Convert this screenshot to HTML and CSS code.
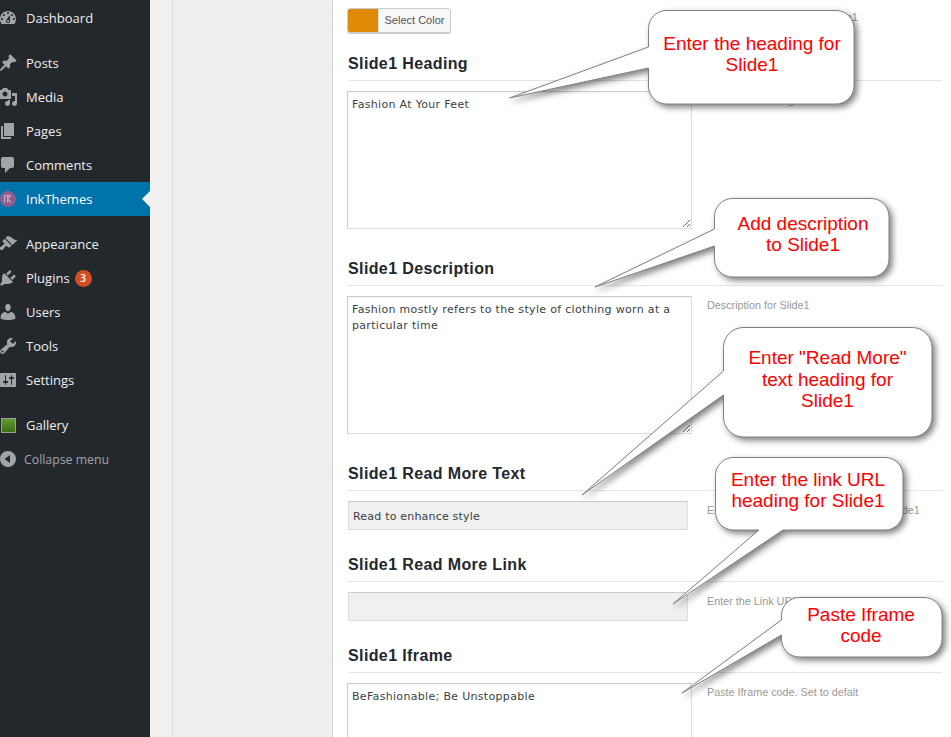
FILE: index.html
```html
<!DOCTYPE html>
<html lang="en">
<head>
<meta charset="utf-8">
<title>Theme Options</title>
<link rel="stylesheet" href="styles.css">
</head>
<body>
<nav class="sidebar">
  <ul class="menu">
    <li class="item"><svg class="icon" viewBox="0 0 20 20"><path d="M3.76 16h12.48c1.1-1.37 1.76-3.11 1.76-5 0-4.42-3.58-8-8-8s-8 3.58-8 8c0 1.89.66 3.63 1.76 5zM10 4c.55 0 1 .45 1 1s-.45 1-1 1-1-.45-1-1 .45-1 1-1zM6 6c.55 0 1 .45 1 1s-.45 1-1 1-1-.45-1-1 .45-1 1-1zm8 0c.55 0 1 .45 1 1s-.45 1-1 1-1-.45-1-1 .45-1 1-1zm-5.37 5.55L12 7v6c0 1.1-.9 2-2 2s-2-.9-2-2c0-.57.24-1.08.63-1.45zM4 10c.55 0 1 .45 1 1s-.45 1-1 1-1-.45-1-1 .45-1 1-1zm12 0c.55 0 1 .45 1 1s-.45 1-1 1-1-.45-1-1 .45-1 1-1zm-5 3c0-.55-.45-1-1-1s-1 .45-1 1 .45 1 1 1 1-.45 1-1z" fill-rule="evenodd"/></svg>Dashboard</li>
    <li class="item group"><svg class="icon" viewBox="0 0 20 20"><path d="M10.44 3.02l1.82-1.82 6.36 6.35-1.83 1.82c-1.05-.68-2.48-.57-3.41.36l-.75.75c-.92.93-1.04 2.35-.35 3.41l-1.83 1.82-2.41-2.41-2.8 2.79c-.42.42-3.38 2.71-3.8 2.29s1.86-3.39 2.28-3.81l2.79-2.79L4.1 9.36l1.83-1.82c1.05.69 2.48.57 3.4-.36l.75-.75c.93-.92 1.05-2.35.36-3.41z"/></svg>Posts</li>
    <li class="item"><svg class="icon" viewBox="0 0 20 20"><path d="M13 11V4c0-.55-.45-1-1-1h-1.67L9 1H5L3.67 3H2c-.55 0-1 .45-1 1v7c0 .55.45 1 1 1h10c.55 0 1-.45 1-1zM7 4.5c1.38 0 2.5 1.12 2.5 2.5S8.38 9.5 7 9.5 4.5 8.38 4.5 7 5.62 4.5 7 4.5zM14 6h5v10.5c0 1.38-1.12 2.5-2.5 2.5S14 17.88 14 16.5s1.12-2.5 2.5-2.5c.17 0 .34.02.5.05V9h-3V6zm-4 8.05V13h2v3.5c0 1.38-1.12 2.5-2.5 2.5S7 17.88 7 16.5 8.12 14 9.5 14c.17 0 .34.02.5.05z" fill-rule="evenodd"/></svg>Media</li>
    <li class="item"><svg class="icon" viewBox="0 0 20 20"><path d="M6 15V2h10v13H6zm-1 1h8v2H3V5h2v11z"/></svg>Pages</li>
    <li class="item"><svg class="icon" viewBox="0 0 20 20"><path d="M5 2h9c1.1 0 2 .9 2 2v7c0 1.1-.9 2-2 2h-2l-5 5v-5H5c-1.1 0-2-.9-2-2V4c0-1.1.9-2 2-2z"/></svg>Comments</li>
    <li class="item active"><svg class="icon" viewBox="0 0 20 20"><circle class="ink-disc" cx="10" cy="10" r="8"/><path class="ink-mark" d="M6.500 6.500v7M9.500 6.500v7M9.500 10l3-3.500M9.500 10l3.500 3.500M6 6.500h7"/></svg>InkThemes</li>
    <li class="item group"><svg class="icon" viewBox="0 0 20 20"><path d="M14.48 11.06L7.41 3.99l1.5-1.5c.5-.56 2.3-.47 3.51.32 1.21.8 1.43 1.28 2.91 2.1 1.18.64 2.45 1.26 4.45.85zm-.71.71L6.7 4.7 4.93 6.47c-.39.39-.39 1.02 0 1.41l1.06 1.06c.39.39.39 1.03 0 1.42-.6.6-1.43 1.11-2.21 1.69-.35.26-.7.53-1.01.84C1.43 12.73 1 14.41 1.9 15.3c.89.9 2.27.9 3.1.1.31-.31.58-.66.85-1.01.57-.78 1.08-1.61 1.69-2.21.39-.39 1.02-.39 1.41 0l1.06 1.06c.39.39 1.02.39 1.41 0z"/></svg>Appearance</li>
    <li class="item"><svg class="icon" viewBox="0 0 20 20"><path d="M13.11 4.36L9.87 7.6 8 5.73l3.24-3.24c.35-.34 1.05-.2 1.56.32.52.51.66 1.21.31 1.55zm-8 1.77l.91-1.12 9.01 9.01-1.19.84c-.71.71-2.63 1.16-3.82 1.16H6.14L4.9 17.26c-.59.59-1.54.59-2.12 0-.59-.58-.59-1.53 0-2.12l1.24-1.24v-3.88c0-1.13.4-3.19 1.09-3.89zm7.26 3.97l3.24-3.24c.34-.35 1.04-.21 1.55.31.52.51.66 1.21.31 1.55l-3.24 3.25z"/></svg>Plugins<span class="badge">3</span></li>
    <li class="item"><svg class="icon" viewBox="0 0 20 20"><path d="M10 9.25c-2.27 0-2.73-3.44-2.73-3.44C7 4.02 7.82 2 9.97 2c2.16 0 2.98 2.02 2.71 3.81 0 0-.41 3.44-2.68 3.44zm0 2.57L12.72 10c2.39 0 4.52 2.33 4.52 4.53v2.49s-3.65 1.13-7.24 1.13c-3.65 0-7.24-1.13-7.24-1.13v-2.49c0-2.25 1.94-4.48 4.47-4.48z"/></svg>Users</li>
    <li class="item"><svg class="icon" viewBox="0 0 20 20"><path d="M16.68 9.77c-1.34 1.34-3.3 1.67-4.95.99l-5.41 6.52c-.99.99-2.59.99-3.58 0s-.99-2.59 0-3.57l6.52-5.42c-.68-1.65-.35-3.61.99-4.95 1.28-1.28 3.12-1.62 4.72-1.06l-2.89 2.89 2.82 2.82 2.86-2.87c.53 1.58.18 3.39-1.08 4.65zM3.81 16.21c.4.39 1.04.39 1.43 0 .4-.4.4-1.04 0-1.43-.39-.4-1.03-.4-1.43 0-.39.39-.39 1.03 0 1.43z" fill-rule="evenodd"/></svg>Tools</li>
    <li class="item"><svg class="icon" viewBox="0 0 20 20"><path d="M18 16V4c0-.55-.45-1-1-1H3c-.55 0-1 .45-1 1v12c0 .55.45 1 1 1h14c.55 0 1-.45 1-1zM8 11h1c.55 0 1 .45 1 1s-.45 1-1 1H8v1.5c0 .28-.22.5-.5.5s-.5-.22-.5-.5V13H6c-.55 0-1-.45-1-1s.45-1 1-1h1V5.5c0-.28.22-.5.5-.5s.5.22.5.5V11zm5-2h-1c-.55 0-1-.45-1-1s.45-1 1-1h1V5.5c0-.28.22-.5.5-.5s.5.22.5.5V7h1c.55 0 1 .45 1 1s-.45 1-1 1h-1v5.5c0 .28-.22.5-.5.5s-.5-.22-.5-.5V9z" fill-rule="evenodd"/></svg>Settings</li>
    <li class="item group"><span class="gallery-icon"></span>Gallery</li>
    <li class="item collapse"><svg class="icon" viewBox="0 0 20 20"><path d="M10 2a8 8 0 1 1 0 16 8 8 0 0 1 0-16zm2 4L6.500 10l5.500 4z" fill-rule="evenodd"/></svg><span class="collapse-label">Collapse menu</span></li>
  </ul>
</nav>

<div class="gutter"></div>
<div class="tabs"></div>

<main class="content">
  <div class="row first">
    <button class="color-button" type="button"><span class="swatch"></span><span class="color-label">Select Color</span></button>
    <p class="desc">Set Background Color of Slide1</p>
  </div>

  <h3 class="heading">Slide1 Heading</h3>
  <div class="row">
    <textarea class="area">Fashion At Your Feet</textarea>
    <p class="desc">Enter the Heading for Slide1</p>
  </div>

  <h3 class="heading after-area">Slide1 Description</h3>
  <div class="row">
    <textarea class="area">Fashion mostly refers to the style of clothing worn at a particular time</textarea>
    <p class="desc">Description for Slide1</p>
  </div>

  <h3 class="heading after-area">Slide1 Read More Text</h3>
  <div class="row">
    <input class="field" type="text" value="Read to enhance style">
    <p class="desc">Enter the Read More Text heading for Slide1</p>
  </div>

  <h3 class="heading after-field">Slide1 Read More Link</h3>
  <div class="row">
    <input class="field" type="text" value="">
    <p class="desc">Enter the Link URL for Slide1</p>
  </div>

  <h3 class="heading after-field">Slide1 Iframe</h3>
  <div class="row">
    <textarea class="area">BeFashionable; Be Unstoppable</textarea>
    <p class="desc">Paste Iframe code. Set to defalt</p>
  </div>
</main>

<div class="annotations">
  <svg class="bubbles" viewBox="0 0 951 737" width="951" height="737">
    <path class="bubble" d="M666 10.500H836A18 18 0 0 1 854 28.500V86A18 18 0 0 1 836 104H666A18 18 0 0 1 648.500 86V68L509.500 98L648.500 47V28.500A18 18 0 0 1 666 10.500Z"/>
    <path class="bubble" d="M732 198.500H871A18 18 0 0 1 889 216.500V259A18 18 0 0 1 871 277H732A18 18 0 0 1 714.500 259V246L595 287L714.500 229V216.500A18 18 0 0 1 732 198.500Z"/>
    <path class="bubble" d="M743 327.500H912A20 20 0 0 1 932 347.500V417A20 20 0 0 1 912 437H743A20 20 0 0 1 723.500 417V395L582 495L723.500 371V347.500A20 20 0 0 1 743 327.500Z"/>
    <path class="bubble" d="M733 457.500H885A18 18 0 0 1 903 475.500V512A18 18 0 0 1 885 530H783L673 604L759 530H733A18 18 0 0 1 715.500 512V475.500A18 18 0 0 1 733 457.500Z"/>
    <path class="bubble" d="M799 597.500H924A18 18 0 0 1 942 615.500V639A18 18 0 0 1 924 657H799A18 18 0 0 1 781.500 639V635L682 693L781.500 620V615.500A18 18 0 0 1 799 597.500Z"/>
  </svg>
  <div class="note note1">Enter the heading for<br>Slide1</div>
  <div class="note note2">Add description<br>to Slide1</div>
  <div class="note note3">Enter "Read More"<br>text heading for<br>Slide1</div>
  <div class="note note4">Enter the link URL<br>heading for Slide1</div>
  <div class="note note5">Paste Iframe<br>code</div>
</div>
</body>
</html>
```

FILE: styles.css
```css
* { box-sizing: border-box; }

html, body {
  margin: 0;
  height: 100%;
  overflow: hidden;
}

body {
  display: flex;
  position: relative;
  background: #fff;
  font-family: "Liberation Sans", Arial, sans-serif;
}

/* Admin sidebar */
.sidebar {
  flex: 0 0 150px;
  height: 100%;
  background: #23282d;
}

.menu {
  list-style: none;
  margin: 1px 0 0;
  padding: 0;
}

.item {
  position: relative;
  display: flex;
  align-items: center;
  height: 34px;
  color: #eee;
  font: 13px/34px "Open Sans", sans-serif;
}

.item.group { margin-top: 11px; }

.icon {
  flex: none;
  width: 20px;
  height: 20px;
  margin: 0 8px 0 -2px;
  fill: #a0a5aa;
}

.active {
  background: #0073aa;
  color: #fff;
}

.active::after {
  content: "";
  position: absolute;
  right: 0;
  top: 9px;
  border: 8px solid transparent;
  border-left-width: 0;
  border-right-color: #f1f1f1;
}

.ink-disc { fill: #8f5d8c; }

.ink-mark {
  fill: none;
  stroke: #c9a6c6;
  stroke-width: 1.2;
}

.gallery-icon {
  flex: none;
  width: 15px;
  height: 15px;
  margin: 0 10px 0 1px;
  border: 1px solid #9aa39a;
  background: linear-gradient(#5f9a2e, #3d6f19);
}

.collapse {
  color: #a0a5aa;
  font-size: 12.3px;
}

.collapse .icon { margin-right: 6px; }

.collapse-label { padding-top: 1px; line-height: 33px; }

.badge {
  width: 17px;
  height: 17px;
  margin-left: 5px;
  border-radius: 50%;
  background: #d54e21;
  color: #fff;
  font: 600 10px/17px "Open Sans", sans-serif;
  text-align: center;
}

/* Grey columns between the sidebar and the form */
.gutter {
  flex: 0 0 23px;
  background: #f0f0f0;
  border-right: 1px solid #ddd;
}

.tabs {
  flex: 0 0 160px;
  background: #efefef;
  border-right: 1px solid #d4d4d4;
}

/* Form */
.content {
  flex: 1;
  padding: 8px 0 0 14px;
  min-width: 0;
}

.row {
  display: grid;
  grid-template-columns: 345px 1fr;
  column-gap: 15px;
  align-items: start;
}

.heading {
  height: 35px;
  margin: 0 9px 10px 1px;
  border-bottom: 1px solid #e5e5e5;
  color: #23282d;
  font-size: 16px;
  font-weight: 700;
  letter-spacing: .38px;
  line-height: 36px;
}

.row.first + .heading { margin-top: 13px; }
.after-area { margin-top: 22px; }
.after-field { margin-top: 17px; }

.desc {
  margin: 0;
  color: #999;
  font-size: 10.8px;
  line-height: 18px;
}

.color-button {
  display: flex;
  align-items: stretch;
  width: 104px;
  height: 25px;
  padding: 0;
  border: 1px solid #ccc;
  border-radius: 3px;
  box-shadow: 0 1px 0 #ccc;
  background: #f7f7f7;
  overflow: hidden;
}

.swatch {
  flex: 0 0 30px;
  background: #e08a07;
}

.color-label {
  flex: 1;
  border-left: 1px solid #ddd;
  color: #555;
  font: 11px/23px "Liberation Sans", Arial, sans-serif;
  text-align: center;
}

.area {
  display: block;
  width: 345px;
  height: 138px;
  margin: 0;
  padding: 5px 4px 4px;
  border: 1px solid #ddd;
  border-top-color: #ccc;
  border-left-color: #ccc;
  box-shadow: inset 0 1px 2px rgba(0, 0, 0, .05);
  background: #fff;
  color: #3a3f44;
  font: 11px/16px "DejaVu Sans", Verdana, sans-serif;
  letter-spacing: .32px;
  outline: none;
}

.field {
  display: block;
  width: 340px;
  height: 29px;
  margin: 0 0 0 1px;
  padding: 1px 4px 0;
  border: 1px solid #ddd;
  border-top-color: #ccc;
  background: #f0f0f0;
  color: #3a3f44;
  font: 11px "DejaVu Sans", Verdana, sans-serif;
  letter-spacing: .2px;
  outline: none;
}

/* Callouts drawn over the screenshot */
.annotations {
  position: absolute;
  top: 0;
  left: 0;
  width: 951px;
  height: 737px;
  pointer-events: none;
}

.bubbles {
  position: absolute;
  top: 0;
  left: 0;
}

.bubble {
  fill: #fff;
  stroke: #808080;
  stroke-width: 1;
  filter: drop-shadow(3px 3px 3px rgba(0, 0, 0, .5));
}

.note {
  position: absolute;
  color: #f00;
  font-size: 19px;
  line-height: 21px;
  text-align: center;
}

.note1 { left: 648px; top: 33px; width: 208px; }
.note2 { left: 714px; top: 213px; width: 178px; }
.note3 { left: 723px; top: 347px; width: 209px; line-height: 21.5px; }
.note4 { left: 715px; top: 469px; width: 186px; }
.note5 { left: 781px; top: 604px; width: 160px; }
```
